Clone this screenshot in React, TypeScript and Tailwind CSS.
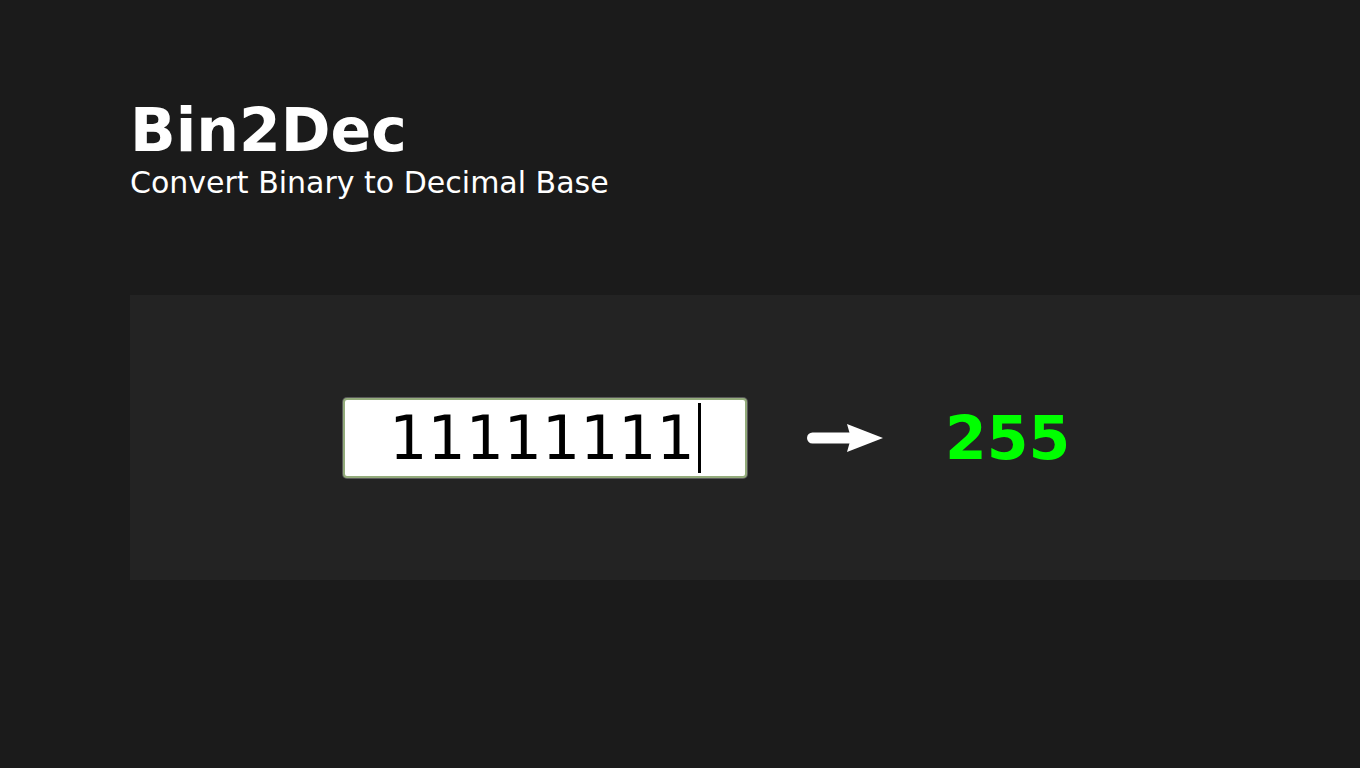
export default function App() {
  return (
    <div className="min-h-[768px] w-full bg-[#1b1b1b] text-white font-['DejaVu_Sans',sans-serif] overflow-hidden">
      <header className="pl-[130px] pt-[100px]">
        <h1 className="text-[60px] font-bold leading-none">Bin2Dec</h1>
        <p className="mt-[8px] text-[30px] leading-none">Convert Binary to Decimal Base</p>
      </header>
      <section className="ml-[130px] mt-[97px] h-[285px] bg-[#232323] flex items-center pl-[213px]">
        <div className="w-[404px] h-[80px] bg-white border-2 border-[#93ab7b] rounded-[4px] shadow-[0_0_0_1px_#5a5a5a] flex items-center justify-center text-black text-[60px] leading-none">
          <span>11111111</span>
          <span className="ml-[3px] w-[3px] h-[70px] bg-black" />
        </div>
        <svg className="ml-[60px]" width="77" height="28" viewBox="0 0 77 28">
          <line x1="5.5" y1="14" x2="46" y2="14" stroke="white" strokeWidth="11" strokeLinecap="round" />
          <polygon points="40,0 76,14 40,28 44,14" fill="white" />
        </svg>
        <div className="ml-[61px] text-[60px] font-bold leading-none text-[#00ff00]">255</div>
      </section>
    </div>
  );
}
